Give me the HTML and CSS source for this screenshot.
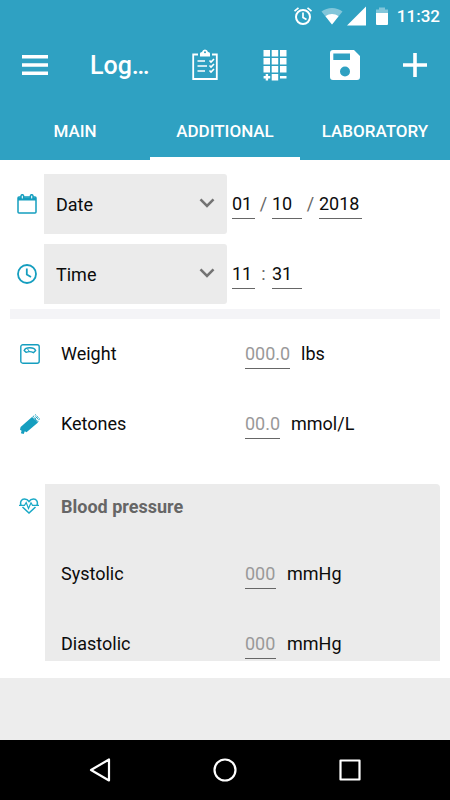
FILE: index.html
```html
<!DOCTYPE html>
<html lang="en">
<head>
<meta charset="utf-8">
<meta name="viewport" content="width=device-width, initial-scale=1">
<title>Log entry</title>
<link rel="stylesheet" href="styles.css">
</head>
<body>
<header class="header">
  <div class="status">
    <svg width="20" height="20" viewBox="0 0 20 20" fill="none" stroke="#fff" stroke-width="2"><circle cx="10" cy="11" r="7"/><path d="M10 6.500v5l3.500 2M1.500 5.200l4-3.400M18.500 5.200l-4-3.400" stroke-width="1.700"/></svg>
    <svg class="wifi" width="22" height="18" viewBox="0 0 22 18" fill="#fff"><path opacity=".4" d="M11 17.500L.5 4.500C6.500-.2 15.500-.2 21.500 4.500z"/><path d="M11 17.500L4.500 9.300c3.800-3 9.200-3 13 0z"/></svg>
    <svg class="cell" width="20" height="20" viewBox="0 0 20 20"><path d="M0 19.500L19 .5v19z" fill="#fff"/></svg>
    <svg class="battery" width="12" height="18" viewBox="0 0 12 18" fill="#fff"><path opacity=".4" d="M0 2.500h3V.5h6v2h3V6H0z"/><path d="M0 6h12v11q0 1-1 1H1q-1 0-1-1z"/></svg>
    <span class="clock">11:32</span>
  </div>
  <div class="toolbar">
    <button class="tool" aria-label="Menu"><svg width="26" height="20" viewBox="0 0 26 20" fill="#fff"><path d="M0 0h26v3.500H0zM0 8.200h26v3.500H0zM0 16.500h26V20H0z"/></svg></button>
    <h1 class="title">Log…</h1>
    <button class="tool" aria-label="Tasks"><svg width="26" height="32" viewBox="0 0 26 32" fill="none" stroke="#fff"><path d="M6 5.500H1.200V30h23.600V5.500H20" stroke-width="1.800"/><path d="M8 7.500V4.500Q8 3 10 3q.5-2.500 3-2.500T16 3q2 0 2 1.500v3z" fill="#fff" stroke="none"/><circle cx="13" cy="3.200" r="1" fill="#2fa1c2" stroke="none"/><path d="M5.500 12H13M5.500 17H15M5.500 22H13M17.500 11.500l1.500 1.500 3-3M17.500 16.500l1.500 1.500 3-3M17.500 21.500l1.500 1.500 3-3" stroke-width="1.600"/></svg></button>
    <button class="tool" aria-label="Keypad"><svg width="24" height="32" viewBox="0 0 24 32" fill="#fff"><path d="M.5 1h6.500v6.500H.5zM8.700 1h6.500v6.500H8.700zM17 1h6.500v6.500H17zM.5 9h6.500v6.500H.5zM8.700 9h6.500v6.500H8.700zM17 9h6.500v6.500H17zM.5 17h6.500v6.500H.5zM8.700 17h6.500v6.500H8.700zM17 17h6.500v6.500H17zM8.700 25h6.500v6.500H8.700zM17 27h6.500v2.500H17zM2.700 25h2.400v2.100h2.100v2.400H5.100v2.100H2.700v-2.100H.6v-2.400h2.100z"/></svg></button>
    <button class="tool" aria-label="Save"><svg width="30" height="30" viewBox="0 0 30 30"><path fill="#fff" fill-rule="evenodd" d="M3 0h21l6 6v21q0 3-3 3H3q-3 0-3-3V3q0-3 3-3zM3.300 3.500V10H20V3.500zM15 16.500a5 5 0 1 0 0 10a5 5 0 1 0 0-10z"/></svg></button>
    <button class="tool" aria-label="Add"><svg width="26" height="26" viewBox="0 0 26 26"><path d="M13 1v24M1 13h24" stroke="#fff" stroke-width="3.600"/></svg></button>
  </div>
  <nav class="tabs">
    <a class="tab" href="#main">MAIN</a>
    <a class="tab tab-active" href="#additional" aria-current="page">ADDITIONAL</a>
    <a class="tab" href="#laboratory">LABORATORY</a>
  </nav>
</header>

<main class="content">
  <section class="moment">
    <div class="when">
      <svg class="icon" width="20" height="20" viewBox="0 0 20 20" fill="none" stroke="#159ebf" stroke-width="1.500"><rect x="1" y="3" width="18" height="16" rx="1"/><path d="M1 3.500h18v3H1z" fill="#159ebf" stroke="none"/><rect x="4" y=".7" width="2.600" height="4.600" rx="1.300" fill="#fff"/><rect x="13.400" y=".7" width="2.600" height="4.600" rx="1.300" fill="#fff"/></svg>
      <label class="picker"><select class="select" aria-label="Date"><option>Date</option></select><svg class="chevron" width="16" height="10" viewBox="0 0 16 10"><path d="M1.500 1.300L8 7.800l6.500-6.500" fill="none" stroke="#737373" stroke-width="2.600"/></svg></label>
      <div class="parts">
        <input class="field w-day" aria-label="Month" value="01"><span class="mark">/</span><input class="field w-month" aria-label="Day" value="10"><span class="mark">/</span><input class="field w-year" aria-label="Year" value="2018">
      </div>
    </div>
    <div class="when">
      <svg class="icon" width="20" height="20" viewBox="0 0 20 20" fill="none" stroke="#159ebf" stroke-width="1.800"><circle cx="10" cy="10" r="9"/><path d="M9.800 4.500v6l4.200 2.500"/></svg>
      <label class="picker"><select class="select" aria-label="Time"><option>Time</option></select><svg class="chevron" width="16" height="10" viewBox="0 0 16 10"><path d="M1.500 1.300L8 7.800l6.500-6.500" fill="none" stroke="#737373" stroke-width="2.600"/></svg></label>
      <div class="parts">
        <input class="field w-day" aria-label="Hour" value="11"><span class="mark">:</span><input class="field w-month" aria-label="Minute" value="31">
      </div>
    </div>
  </section>
  <hr class="divider">
  <div class="measure">
    <svg class="icon" width="20" height="20" viewBox="0 0 20 20" fill="none" stroke="#159ebf" stroke-width="1.400"><rect x=".8" y=".8" width="18.400" height="18.400" rx="2"/><path d="M6 8.300L4.200 6.500C5.500 2.800 14 2.800 15.600 6.500L13.500 8.700C11.500 7.500 8.300 7.400 6 8.300z"/><path d="M9.500 7.500L7.500 5" stroke-width="1"/></svg>
    <label for="weight">Weight</label>
    <div class="value"><input class="field w-weight" id="weight" placeholder="000.0"><span>lbs</span></div>
  </div>
  <div class="measure">
    <svg class="icon" width="20" height="20" viewBox="0 0 20 20"><path fill="#159ebf" d="M12 3L18 8.600L6.500 18.200L4.800 17.200L3.700 20L.9 19.200L1.600 16.800L0 15.800L.6 13z"/><path d="M12.500 3L15.500.8L19.500 4.600L17.600 8" fill="none" stroke="#159ebf" stroke-width="1" stroke-dasharray="2 1"/><path d="M13.500 4l2 .2-.2 2 2 .2M15.500 2.500l2.500 2.300" fill="none" stroke="#159ebf"/></svg>
    <label for="ketones">Ketones</label>
    <div class="value"><input class="field w-ketones" id="ketones" placeholder="00.0"><span>mmol/L</span></div>
  </div>
  <section class="group">
    <svg class="icon group-icon" width="20" height="16" viewBox="0 0 20 16" fill="none" stroke="#19a9c6" stroke-width="1.500"><path d="M2 7C.8 3.800 2.500 1 5.500 1 7.500 1 9 2 10 3.500 11 2 12.500 1 14.500 1 17.500 1 19.200 3.800 18 7M3.500 9L10 15l6.500-6"/><path d="M0 7.300h5.500L7.200 4.500l2.300 6L12 4.800l1.500 2.500H20" stroke-width="1.200"/></svg>
    <div class="panel">
      <h2 class="panel-title">Blood pressure</h2>
      <div class="reading"><label for="systolic">Systolic</label><div class="value"><input class="field w-bp" id="systolic" placeholder="000"><span>mmHg</span></div></div>
      <div class="reading"><label for="diastolic">Diastolic</label><div class="value"><input class="field w-bp" id="diastolic" placeholder="000"><span>mmHg</span></div></div>
    </div>
  </section>
</main>
<div class="footer-space"></div>
<nav class="system">
  <button class="key" aria-label="Back"><svg width="22" height="24" viewBox="0 0 22 24" fill="none" stroke="#fff" stroke-width="2.200" stroke-linejoin="round"><path d="M20 1.500v21L2 12z"/></svg></button>
  <button class="key" aria-label="Home"><svg width="24" height="24" viewBox="0 0 24 24" fill="none" stroke="#fff" stroke-width="2.200"><circle cx="12" cy="12" r="10.500"/></svg></button>
  <button class="key" aria-label="Recent apps"><svg width="22" height="22" viewBox="0 0 22 22" fill="none" stroke="#fff" stroke-width="2.200" stroke-linejoin="round"><rect x="1.500" y="1.500" width="19" height="19"/></svg></button>
</nav>
</body>
</html>
```

FILE: styles.css
```css
* { box-sizing: border-box; }

body {
  margin: 0;
  height: 100vh;
  display: flex;
  flex-direction: column;
  background: #fff;
  color: #0c0c0c;
  font: 18px/28px Roboto, sans-serif;
}

svg { display: block; flex: none; }
button { padding: 0; border: 0; background: none; cursor: pointer; }

.header { background: #2fa1c2; color: #fff; }

.status {
  height: 30px;
  padding: 1px 10px 0 0;
  display: flex;
  align-items: center;
  justify-content: flex-end;
}
.wifi { margin-left: 8px; }
.cell { margin-left: 4px; }
.battery { margin-left: 9px; }
.clock { margin-left: 9px; font-size: 17px; font-weight: 500; }

.toolbar {
  height: 70px;
  display: grid;
  grid-template-columns: 70px 1fr repeat(4, 70px);
  align-items: center;
}
.tool { height: 70px; display: grid; place-items: center; }
.title { margin: 0; padding: 2px 0 0 20px; font-size: 25px; font-weight: 500; }

.tabs { height: 60px; display: grid; grid-template-columns: repeat(3, 1fr); }
.tab {
  padding-top: 4px;
  display: grid;
  place-items: center;
  border-bottom: 3px solid transparent;
  color: inherit;
  font-size: 17px;
  font-weight: 500;
  text-decoration: none;
}
.tab-active { border-color: #fff; }

.content { flex: 1; min-height: 0; padding: 14px 10px 0; overflow: hidden; }

.moment { display: grid; gap: 10px; }
.when {
  display: grid;
  grid-template-columns: 34px 183px 1fr;
  align-items: center;
}
.icon { margin-left: 7px; }
.picker { position: relative; }
.select {
  width: 100%;
  height: 60px;
  padding: 2px 12px 0;
  appearance: none;
  border: 0;
  border-radius: 0 3px 3px 0;
  background: #ebebeb;
  color: inherit;
  font: inherit;
}
.chevron { position: absolute; right: 12px; top: 24px; pointer-events: none; }

.parts { padding-left: 5px; display: flex; align-items: center; }
.mark { width: 17px; text-align: center; color: #666; }
.field {
  height: 29px;
  padding: 0;
  border: 0;
  border-bottom: 1px solid #666;
  border-radius: 0;
  background: none;
  color: inherit;
  font: inherit;
}
.field::placeholder { color: #999; opacity: 1; }
.w-day { width: 23px; }
.w-month { width: 30px; }
.w-year { width: 43px; }
.w-weight { width: 45px; }
.w-ketones { width: 35px; }
.w-bp { width: 31px; }

.divider { height: 10px; margin: 5px 0 0; border: 0; background: #f4f4f7; }

.measure {
  height: 70px;
  display: grid;
  grid-template-columns: 51px 184px 1fr;
  align-items: center;
}
.measure .icon { margin-left: 10px; }
.value { display: flex; align-items: center; gap: 11px; }

.group { margin-top: 25px; display: grid; grid-template-columns: 35px 1fr; }
.group-icon { margin: 14px 0 0 9px; }
.panel { padding-left: 16px; border-radius: 0 4px 4px 0; background: #ebebeb; }
.panel-title {
  margin: 0;
  padding: 9px 0 18px;
  color: #666;
  font-size: 18px;
  font-weight: 700;
}
.reading {
  height: 70px;
  display: grid;
  grid-template-columns: 184px 1fr;
  align-items: center;
}

.footer-space { height: 79px; border-top: 17px solid #fff; background: #ededed; }

.system {
  height: 60px;
  padding: 0 37px;
  display: grid;
  grid-template-columns: repeat(3, 1fr);
  background: #000;
}
.key { display: grid; place-items: center; }
```
